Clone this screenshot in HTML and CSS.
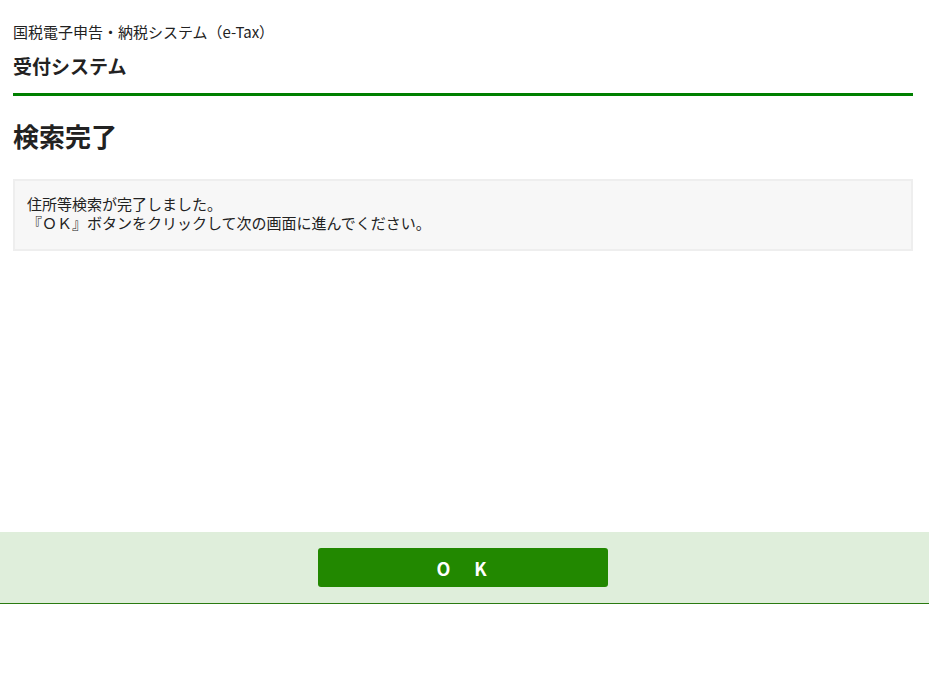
FILE: index.html
```html
<!DOCTYPE html>
<html lang="ja">
<head>
<meta charset="utf-8">
<title>検索完了</title>
<link rel="stylesheet" href="styles.css">
</head>
<body>
<div class="main">
  <header class="site-header">
    <div class="site-name">国税電子申告・納税システム（e-Tax）</div>
    <div class="system-name">受付システム</div>
  </header>
  <h1 class="page-title">検索完了</h1>
  <div class="message-box">
    <p>住所等検索が完了しました。</p>
    <p>『ＯＫ』ボタンをクリックして次の画面に進んでください。</p>
  </div>
</div>
<footer class="action-bar">
  <button class="ok-button" type="button">O　K</button>
</footer>
</body>
</html>
```

FILE: styles.css
```css
html, body {
  margin: 0;
  padding: 0;
  background: #fff;
}
body {
  font-family: "Noto Sans CJK JP", "Noto Sans", sans-serif;
  color: #222;
}
.main {
  height: 532px;
  padding: 0 16px 0 13px;
  box-sizing: border-box;
}
.site-header {
  padding-top: 22px;
  border-bottom: 3px solid #008000;
  padding-bottom: 14px;
}
.site-name {
  font-size: 15px;
  line-height: 20px;
}
.system-name {
  margin-top: 11px;
  font-size: 19px;
  font-weight: bold;
  line-height: 26px;
}
.page-title {
  margin: 22px 0 0;
  font-size: 26px;
  font-weight: bold;
  line-height: 36px;
}
.message-box {
  margin-top: 25px;
  background: #f7f7f7;
  border: 2px solid #eeeeee;
  padding: 13px 12px 17px;
}
.message-box p {
  margin: 0;
  font-size: 15px;
  line-height: 19px;
}
.action-bar {
  height: 71px;
  background: #dfeedb;
  border-bottom: 1px solid #2a7a10;
  display: flex;
  justify-content: center;
  align-items: center;
}
.ok-button {
  width: 290px;
  height: 39px;
  margin-right: 3px;
  padding: 0;
  background: #228800;
  border: none;
  border-radius: 3px;
  color: #fff;
  font-family: "Noto Sans CJK JP", "Noto Sans", sans-serif;
  font-size: 18px;
  font-weight: bold;
  letter-spacing: 3px;
  cursor: pointer;
}
```
